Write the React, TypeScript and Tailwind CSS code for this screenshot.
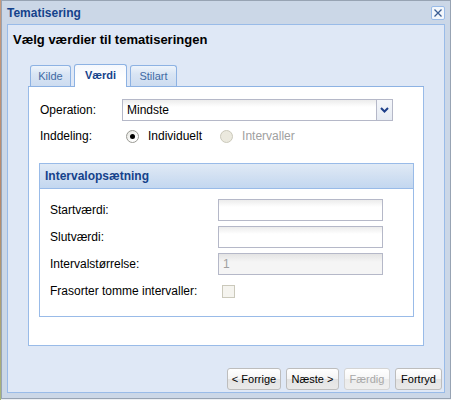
import React from "react";

const font = { fontFamily: '"Liberation Sans", Arial, sans-serif' };

function Radio({ checked, disabled }: { checked?: boolean; disabled?: boolean }) {
  return (
    <span
      className={
        "flex h-[13px] w-[13px] items-center justify-center rounded-full border " +
        (disabled
          ? "border-[#cbc9bb] bg-[#ebe9de]"
          : "border-[#9a9a94] bg-[linear-gradient(135deg,#e4e4de_0%,#ffffff_70%)]")
      }
    >
      {checked && <span className="h-[5px] w-[5px] rounded-full bg-black" />}
    </span>
  );
}

function TextField({ value, disabled }: { value?: string; disabled?: boolean }) {
  return (
    <div
      className={
        "flex h-[22px] w-[165px] items-center border border-[#b5b8c8] pl-[4px] text-[12px] " +
        (disabled
          ? "bg-[linear-gradient(to_bottom,#e4e4e4_0%,#f5f5f5_40%,#f5f5f5_100%)] text-[#a0a0a0]"
          : "bg-[linear-gradient(to_bottom,#ececec_0%,#ffffff_35%,#ffffff_100%)] text-black")
      }
    >
      {value}
    </div>
  );
}

function Button({ label, disabled }: { label: string; disabled?: boolean }) {
  return (
    <div
      className={
        "flex h-[22px] items-center justify-center rounded-[3px] border text-[11px] " +
        (disabled
          ? "border-[#d4d4d4] text-[#a8a8a8] bg-[linear-gradient(to_bottom,#ffffff_0%,#f6f6f6_50%,#ebebeb_51%,#efefef_100%)]"
          : "border-[#bdbdbd] text-black bg-[linear-gradient(to_bottom,#ffffff_0%,#f4f4f4_50%,#e3e3e3_51%,#e9e9e9_100%)]")
      }
    >
      {label}
    </div>
  );
}

export default function App() {
  return (
    <div className="flex h-[400px] w-[451px] bg-[#eceff3]" style={font}>
      <div className="h-[400px] w-[1px] bg-[linear-gradient(to_bottom,#c79a7c,#b7886a_50%,#a7b57a)]" />
      <div className="flex h-[399px] w-[450px] flex-col border border-[#97a3b3] bg-[#cbd7e7]">
        {/* title bar */}
        <div className="flex h-[23px] items-center justify-between pl-[5px] pr-[5px]">
          <span className="text-[12px] font-bold leading-none text-[#15428b]">Tematisering</span>
          <div className="mt-[1px] flex h-[14px] w-[14px] items-center justify-center rounded-[2px] border border-[#99bbe8] bg-[#f3f7fc]">
            <svg width="10" height="10" viewBox="0 0 10 10">
              <path d="M1.5 1.5 L8.5 8.5 M8.5 1.5 L1.5 8.5" stroke="#3a5d94" strokeWidth="1.3" />
            </svg>
          </div>
        </div>

        {/* window body */}
        <div className="mx-[5px] flex h-[369px] flex-col border border-[#99bbe8] bg-[#dfe8f6]">
          <div className="h-[38px] pl-[5px] pt-[7px] text-[13px] font-bold leading-[16px] text-black">
            Vælg værdier til tematiseringen
          </div>

          {/* tab panel */}
          <div className="mx-[20px] flex h-[283px] flex-col">
            <div className="flex h-[24px] items-end gap-[3px] border-b border-[#8db2e3] pl-[2px]">
              <div className="flex h-[21px] w-[41px] items-center justify-center rounded-t-[3px] border border-b-0 border-[#8db2e3] bg-[linear-gradient(to_bottom,#eef4fb_0%,#d9e5f4_40%,#cddcf0_100%)] text-[11px] text-[#416aa3]">
                Kilde
              </div>
              <div className="relative -mb-[1px] flex h-[23px] w-[53px] items-center justify-center rounded-t-[3px] border border-b-0 border-[#8db2e3] bg-[linear-gradient(to_bottom,#f5f8fd_0%,#ffffff_60%)] pb-[1px] text-[11px] font-bold text-[#15428b]">
                Værdi
              </div>
              <div className="flex h-[21px] w-[47px] items-center justify-center rounded-t-[3px] border border-b-0 border-[#8db2e3] bg-[linear-gradient(to_bottom,#eef4fb_0%,#d9e5f4_40%,#cddcf0_100%)] text-[11px] text-[#416aa3]">
                Stilart
              </div>
            </div>

            <div className="flex flex-1 flex-col border-x border-b border-[#99bbe8] bg-white pt-[12px]">
              {/* operation */}
              <div className="flex items-center pl-[11px] text-[12px] text-black">
                <span className="w-[82px]">Operation:</span>
                <div className="flex h-[22px] w-[271px] border border-[#b5b8c8]">
                  <div className="flex flex-1 items-center bg-[linear-gradient(to_bottom,#ececec_0%,#ffffff_35%,#ffffff_100%)] pl-[4px]">
                    Mindste
                  </div>
                  <div className="flex w-[16px] items-center justify-center border-l border-[#b5b8c8] bg-[linear-gradient(to_bottom,#f4f6fa_0%,#e6ebf3_100%)]">
                    <svg width="9" height="6" viewBox="0 0 9 6">
                      <path d="M1 1 L4.5 4.5 L8 1" stroke="#1d3f8a" strokeWidth="2" fill="none" />
                    </svg>
                  </div>
                </div>
              </div>

              {/* division */}
              <div className="mt-[6px] flex h-[18px] items-center pl-[11px] text-[12px] text-black">
                <span className="w-[86px]">Inddeling:</span>
                <Radio checked />
                <span className="ml-[9px]">Individuelt</span>
                <span className="ml-[18px]">
                  <Radio disabled />
                </span>
                <span className="ml-[9px] text-[#a0a0a0]">Intervaller</span>
              </div>

              {/* interval fieldset */}
              <div className="ml-[10px] mt-[18px] w-[375px] border border-[#99bbe8]">
                <div className="flex h-[25px] items-center border-b border-[#99bbe8] bg-[linear-gradient(to_bottom,#e0eaf6_0%,#d3e1f2_45%,#c3d7f0_100%)] pl-[5px] text-[12px] font-bold text-[#15428b]">
                  Intervalopsætning
                </div>
                <div className="flex flex-col gap-[5px] pb-[14px] pl-[10px] pt-[10px] text-[12px] text-black">
                  <div className="flex h-[22px] items-center">
                    <span className="w-[168px]">Startværdi:</span>
                    <TextField />
                  </div>
                  <div className="flex h-[22px] items-center">
                    <span className="w-[168px]">Slutværdi:</span>
                    <TextField />
                  </div>
                  <div className="flex h-[22px] items-center">
                    <span className="w-[168px]">Intervalstørrelse:</span>
                    <TextField value="1" disabled />
                  </div>
                  <div className="flex h-[22px] items-center">
                    <span className="w-[172px]">Frasorter tomme intervaller:</span>
                    <span className="h-[13px] w-[13px] border border-[#cbc9bb] bg-[#f5f4ef]" />
                  </div>
                </div>
              </div>
            </div>
          </div>

          <div className="flex-1" />

          {/* buttons */}
          <div className="flex justify-end gap-[5px] pb-[2px] pr-[2px]">
            <div className="w-[54px]">
              <Button label="< Forrige" />
            </div>
            <div className="w-[53px]">
              <Button label="Næste >" />
            </div>
            <div className="w-[46px]">
              <Button label="Færdig" disabled />
            </div>
            <div className="w-[47px]">
              <Button label="Fortryd" />
            </div>
          </div>
        </div>
      </div>
    </div>
  );
}
